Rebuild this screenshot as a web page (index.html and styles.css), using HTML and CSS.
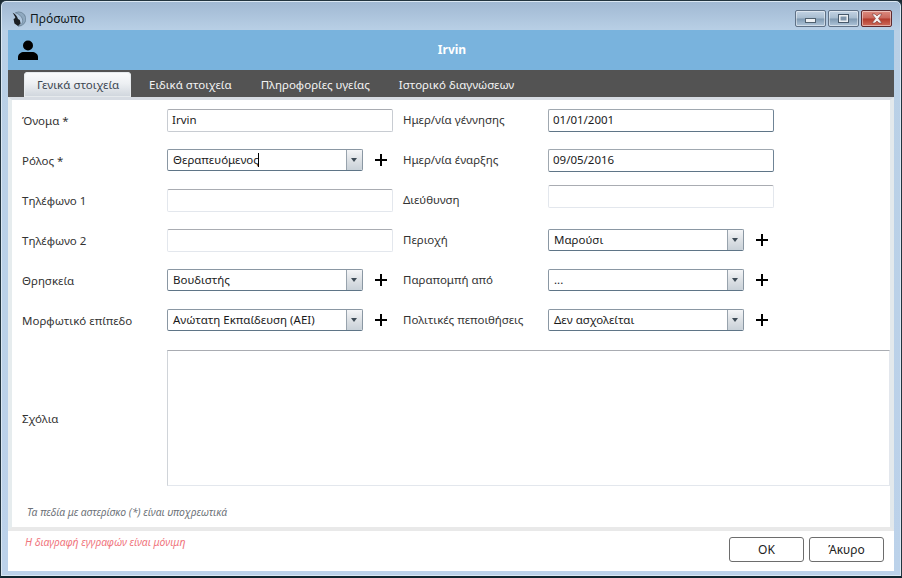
FILE: index.html
```html
<!DOCTYPE html>
<html lang="el">
<head>
<meta charset="utf-8">
<title>Πρόσωπο</title>
<link rel="stylesheet" href="styles.css">
</head>
<body>
<div class="window">
  <div class="titlebar">
    <svg class="app-icon" width="16" height="16" viewBox="0 0 18 18"><path d="M6 2a8 8 0 1 1 3 15c4-1 6-4 5-8-1-3-4-6-8-7z" fill="#8fa9c0" stroke="#5d7488" stroke-width=".7"/><path d="M3 2c3 1 5 4 6 7l2 1 1 4-3 3-4-3-1-5 2-1C6 6 4 4 3 2z" fill="#1b1f24"/></svg>
    <span class="title">Πρόσωπο</span>
    <div class="controls">
      <div class="ctl"><span class="min-g"></span></div>
      <div class="ctl"><span class="max-g"></span></div>
      <div class="ctl close"><svg width="16" height="11" viewBox="0 0 16 11"><path d="M3 1h3l2 2 2-2h3l-3.500 4.500L13 10h-3L8 8l-2 2H3l3.500-4.500z" fill="#f4f1f1" stroke="#7d3a36" stroke-width=".6"/></svg></div>
    </div>
  </div>
  <div class="client">
    <div class="header">
      <svg class="person" width="20" height="20" viewBox="0 0 20 20"><circle cx="10" cy="5.500" r="5"/><path d="M0 20v-3c0-3 3-5 6-5h8c3 0 6 2 6 5v3z"/></svg>
      <span class="name">Irvin</span>
    </div>
    <div class="tabs">
      <div class="tab active">Γενικά στοιχεία</div>
      <div class="tab">Ειδικά στοιχεία</div>
      <div class="tab">Πληροφορίες υγείας</div>
      <div class="tab">Ιστορικό διαγνώσεων</div>
    </div>
    <div class="panel">
      <div class="form">
        <label>Όνομα *</label>
        <div class="field"><div class="input strong">Irvin</div></div>
        <label class="col2">Ημερ/νία γέννησης</label>
        <div class="field"><div class="input dark">01/01/2001</div></div>

        <label>Ρόλος *</label>
        <div class="field"><div class="combo focus"><span class="val">Θεραπευόμενος<i class="caret"></i></span><span class="arrow"></span></div><span class="plus"></span></div>
        <label class="col2">Ημερ/νία έναρξης</label>
        <div class="field"><div class="input dark">09/05/2016</div></div>

        <label>Τηλέφωνο 1</label>
        <div class="field"><div class="input"></div></div>
        <label class="col2">Διεύθυνση</label>
        <div class="field raised"><div class="input"></div></div>

        <label>Τηλέφωνο 2</label>
        <div class="field"><div class="input"></div></div>
        <label class="col2">Περιοχή</label>
        <div class="field"><div class="combo"><span class="val">Μαρούσι</span><span class="arrow"></span></div><span class="plus"></span></div>

        <label>Θρησκεία</label>
        <div class="field"><div class="combo"><span class="val">Βουδιστής</span><span class="arrow"></span></div><span class="plus"></span></div>
        <label class="col2">Παραπομπή από</label>
        <div class="field"><div class="combo"><span class="val">...</span><span class="arrow"></span></div><span class="plus"></span></div>

        <label>Μορφωτικό επίπεδο</label>
        <div class="field"><div class="combo"><span class="val">Ανώτατη Εκπαίδευση (ΑΕΙ)</span><span class="arrow"></span></div><span class="plus"></span></div>
        <label class="col2">Πολιτικές πεποιθήσεις</label>
        <div class="field"><div class="combo"><span class="val">Δεν ασχολείται</span><span class="arrow"></span></div><span class="plus"></span></div>
      </div>
      <div class="notes">
        <label>Σχόλια</label>
        <div class="textarea"></div>
      </div>
      <p class="hint">Τα πεδία με αστερίσκο (*) είναι υποχρεωτικά</p>
    </div>
    <div class="footer">
      <p class="warn">Η διαγραφή εγγραφών είναι μόνιμη</p>
      <div class="buttons">
        <button class="btn">OK</button>
        <button class="btn">Άκυρο</button>
      </div>
    </div>
  </div>
</div>
</body>
</html>
```

FILE: styles.css
```css
* { box-sizing: border-box; }
html, body { margin: 0; padding: 0; }
body {
  width: 902px;
  height: 578px;
  overflow: hidden;
  background: #1c2b33;
  font-family: "Noto Sans", "Open Sans", sans-serif;
  font-size: 11.500px;
  color: #2b2b2b;
}
.window {
  width: 902px;
  height: 578px;
  display: flex;
  flex-direction: column;
  padding: 0 7px 5px;
  border: 1px solid #22343f;
  border-bottom: 2px solid #10262f;
  border-radius: 6px 6px 0 0;
  background: linear-gradient(180deg, #a0b8d2 0, #b9d0e6 30px, #bcd2ea 100%);
  box-shadow: inset 0 0 0 1px #dbe8f3;
}
.titlebar {
  height: 29px;
  flex: none;
  display: flex;
  align-items: flex-start;
  margin-left: 1px;
}
.app-icon { flex: none; margin: 10px 0 0 1px; }
.title { margin: 9px 0 0 4px; font-size: 12px; color: #101820; }
.controls {
  margin-left: auto;
  margin-top: 9px;
  margin-right: 2px;
  display: flex;
  gap: 2px;
}
.ctl {
  width: 31px;
  height: 17px;
  display: flex;
  align-items: center;
  justify-content: center;
  border: 1px solid #5f7186;
  border-radius: 2px;
  background: linear-gradient(180deg, #c3d3e4 0, #a7bccf 48%, #7f99b1 52%, #b0c6da 100%);
  box-shadow: inset 0 0 0 1px rgba(255,255,255,.45);
}
.min-g { width: 11px; height: 5px; margin-top: 4px; background: #eef1f4; border: 1px solid #50616f; }
.max-g { width: 11px; height: 9px; border: 1px solid #46586a; background: #7f95ab; box-shadow: inset 0 0 0 1.500px #eef1f4; }
.close {
  border-color: #5e2a2e;
  background: linear-gradient(180deg, #dd8c80 0, #c9685c 48%, #b23a2b 52%, #cf6c5c 100%);
}
.client {
  flex: 1;
  min-height: 0;
  display: flex;
  flex-direction: column;
  background: #fff;
}
.header {
  height: 40px;
  flex: none;
  position: relative;
  display: flex;
  align-items: center;
  justify-content: center;
  background: #79b3dd;
}
.person { position: absolute; left: 10px; top: 10px; fill: #000; }
.name { font-weight: 700; font-size: 12px; color: #fff; margin: -1px 0 0 2px; }
.tabs {
  height: 27px;
  flex: none;
  display: flex;
  align-items: flex-end;
  padding-left: 16px;
  background: #535353;
}
.tab {
  height: 25px;
  padding: 0 12px 0 17px;
  line-height: 26px;
  color: #f4f4f4;
  white-space: nowrap;
}
.tab.active {
  width: 107px;
  padding: 0 0 0 13px;
  margin-right: 1px;
  color: #3b4650;
  border-radius: 4px 4px 0 0;
  background: linear-gradient(180deg, #fbfcfc 0, #edf0f3 45%, #cfd5dc 100%);
  box-shadow: inset 0 0 0 1px #e6eaed;
}
.panel {
  flex: 1;
  min-height: 0;
  padding: 0 4px;
  display: flex;
  flex-direction: column;
  background: #fff;
  border-top: 3px solid #d7dce3;
  border-left: 4px solid #e6ecee;
  border-right: 4px solid #e3e9ec;
  border-bottom: 4px solid #e9e9e9;
}
.form {
  display: grid;
  grid-template-columns: 145px 236px 145px 1fr;
  grid-auto-rows: 40px;
  padding-left: 6px;
  align-items: center;
}
.form label { color: #333; padding-top: 1px; white-space: nowrap; }
.form label.col2 { padding-top: 0; margin-top: -2px; }
.field { display: flex; align-items: center; height: 23px; }
.field.raised { margin-top: -8px; }
.input {
  width: 226px;
  height: 23px;
  padding: 0 4px;
  line-height: 20px;
  background: #fff;
  border: 1px solid #e3e7ed;
  border-top-color: #a9acb2;
  border-radius: 2px;
  color: #1a1a1a;
}
.input.strong { border-color: #c8ccd2; border-top-color: #a9acb2; }
.input.dark {
  border-color: #a0a8b0;
  border-right-color: #6f8496;
  border-bottom-color: #5f7587;
  border-radius: 2px;
}
.combo {
  width: 196px;
  height: 22px;
  display: flex;
  border: 1px solid #8a97a3;
  border-bottom-color: #5f7587;
  border-radius: 2px;
  overflow: hidden;
  color: #1a1a1a;
}
.val {
  flex: 1;
  padding: 0 5px;
  line-height: 20px;
  position: relative;
  white-space: nowrap;
}
.caret { display: inline-block; width: 1px; height: 14px; background: #000; vertical-align: -3px; margin-left: -1px; }
.arrow {
  width: 16px;
  flex: none;
  position: relative;
  border-left: 1px solid #98a3ad;
  background: linear-gradient(180deg, #f4f5f7 0, #dde1e5 50%, #c9d1d8 100%);
}
.arrow::after {
  content: "";
  position: absolute;
  left: 4px;
  top: 8px;
  border: 3.500px solid transparent;
  border-top: 4px solid #3d4a55;
  border-bottom: 0;
}
.plus {
  width: 12px;
  height: 12px;
  margin-left: 12px;
  background:
    linear-gradient(#000, #000) center / 12px 2px no-repeat,
    linear-gradient(#000, #000) center / 2px 12px no-repeat;
}
.notes {
  display: grid;
  grid-template-columns: 145px 1fr;
  align-items: center;
  padding-left: 6px;
  margin-top: 10px;
  margin-right: -4px;
}
.notes label { color: #333; }
.textarea {
  height: 136px;
  background: #fff;
  border: 1px solid #e3e7ed;
  border-top-color: #a9acb2;
  border-left-color: #d0d4d9;
}
.hint {
  margin: 19px 0 0 11px;
  font-size: 10.400px;
  font-style: italic;
  color: #6d7278;
}
.footer {
  height: 40px;
  flex: none;
  display: flex;
  justify-content: space-between;
  padding: 0 10px 0 17px;
  background: #fff;
}
.warn {
  margin: 4px 0 0;
  font-size: 10.400px;
  font-style: italic;
  color: #f0747c;
}
.buttons { display: flex; gap: 5px; padding-top: 6px; }
.btn {
  width: 75px;
  height: 25px;
  padding: 0;
  font: inherit;
  font-size: 12px;
  color: #222;
  background: #fff;
  border: 1px solid #6d6d6d;
  border-radius: 3px;
}
```
